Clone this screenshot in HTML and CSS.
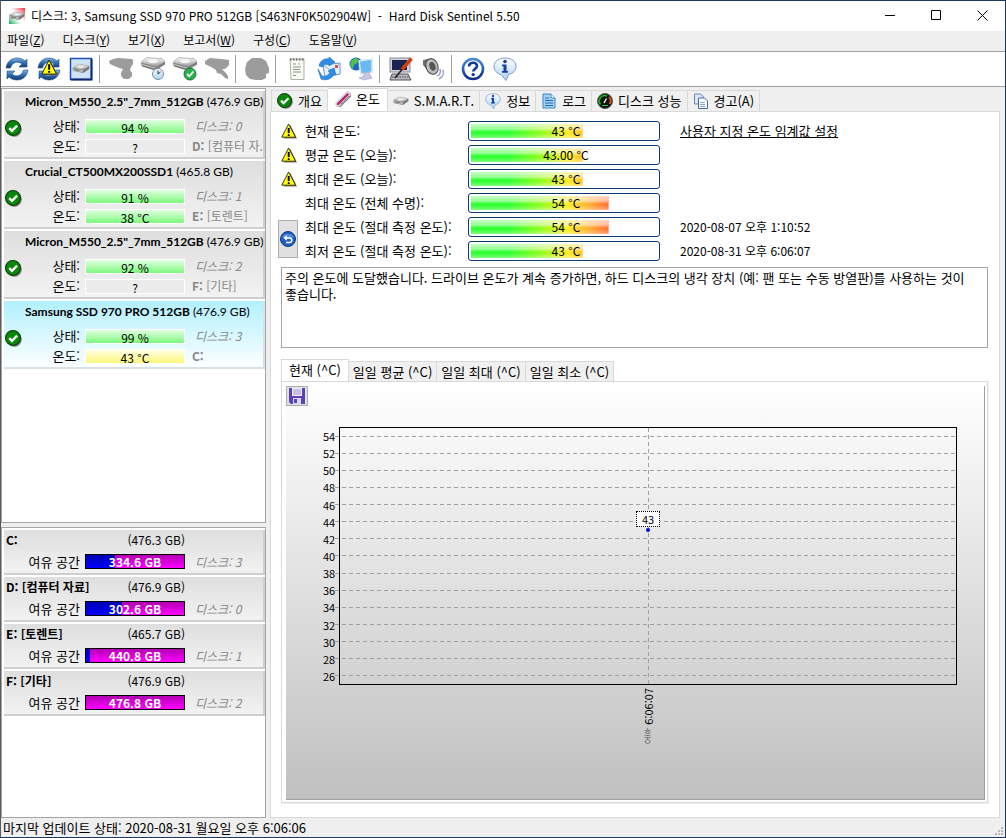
FILE: index.html
```html
<!DOCTYPE html>
<html lang="ko">
  <head>
    <meta charset="utf-8">
    <title>Hard Disk Sentinel</title>
    <link rel="stylesheet" href="styles.css">
  </head>
  <body>
    <!-- shared icons -->
    <svg class="defs" width="0" height="0">
      <defs>
        <linearGradient id="g-blue" x1="0" y1="0" x2="0" y2="1">
          <stop offset="0" stop-color="#7fb6e4" /><stop offset=".5" stop-color="#2c6cae" /><stop offset="1" stop-color="#12386f" />
        </linearGradient>
        <linearGradient id="g-metal" x1="0" y1="0" x2="0" y2="1">
          <stop offset="0" stop-color="#fafafa" /><stop offset="1" stop-color="#9c9c9c" />
        </linearGradient>
        <linearGradient id="g-pale" x1="0" y1="0" x2="0" y2="1">
          <stop offset="0" stop-color="#ffffff" /><stop offset="1" stop-color="#a9d2f5" />
        </linearGradient>
        <linearGradient id="g-ring" x1="0" y1="0" x2="0" y2="1">
          <stop offset="0" stop-color="#4a8be0" /><stop offset="1" stop-color="#0b2f8a" />
        </linearGradient>
        <linearGradient id="g-app" x1="1" y1="0" x2="0" y2="1">
          <stop offset="0" stop-color="#f22a3a" /><stop offset=".45" stop-color="#ffffff" />
          <stop offset=".6" stop-color="#ffffff" /><stop offset="1" stop-color="#18b050" />
        </linearGradient>
      </defs>
      <symbol id="i-check" viewBox="0 0 16 16">
        <circle cx="8.8" cy="8.8" r="7" fill="#777" />
        <circle cx="7.5" cy="7.5" r="7" fill="#0a860a" stroke="#043c04" />
        <path d="M4 7.6l2.6 2.6 4.8-4.9" fill="none" stroke="#fff" stroke-width="2.2" />
      </symbol>
      <symbol id="i-warn" viewBox="0 0 16 16">
        <path d="M9.4 2L16 15.6H3z" fill="#777" />
        <path d="M7.6 1L14.6 14.2H.8z" fill="#ff0" stroke="#222" stroke-width=".9" />
        <path d="M7.7 5v5M7.7 11.2v1.8" stroke="#000" stroke-width="1.9" />
      </symbol>
      <symbol id="i-sync" viewBox="0 0 24 24">
        <path d="M1 11C2 4 7 1 12 1c3 0 6 1 8 3l2-2v8h-8l3-3c-4-3.5-10-2-11.5 4z" fill="url(#g-blue)" stroke="#1c4a80" stroke-width=".6" />
        <path d="M23 13c-1 7-6 10-11 10-3 0-6-1-8-3l-2 2v-8h8l-3 3c4 3.5 10 2 11.5-4z" fill="url(#g-blue)" stroke="#1c4a80" stroke-width=".6" />
      </symbol>
      <symbol id="i-disk" viewBox="0 0 24 16">
        <path d="M1 7L9 2l14 2.5v4L15 14 1 11z" fill="#777" />
        <path d="M1 7L9 2l14 2.5-8 5z" fill="url(#g-metal)" stroke="#999" stroke-width=".5" />
        <ellipse cx="11.5" cy="5.600" rx="5" ry="2" fill="#eee" stroke="#aaa" stroke-width=".5" />
        <path d="M1 7.5L15 10v3.5L1 11z" fill="#b4b4b4" />
        <path d="M3 9.5l7 1.200" stroke="#555" />
      </symbol>
      <!-- drive with the platter side up, used by the test buttons -->
      <symbol id="i-drive" viewBox="0 0 24 16">
        <path d="M0 7l1-2 4-4 16 1 3 3v3l-8 5-4 .5L1 10z" fill="#7f7f7f" />
        <path d="M0 6l5-5 16 1 3 3-9 5z" fill="url(#g-metal)" stroke="#a5a5a5" stroke-width=".5" />
        <ellipse cx="12" cy="4.5" rx="6" ry="2.500" fill="#f4f4f4" stroke="#bbb" stroke-width=".5" />
        <path d="M1 8l13 3.500" stroke="#c8c8c8" />
      </symbol>
      <symbol id="i-info" viewBox="0 0 24 24">
        <path d="M12 1C5.5 1 1 4.500 1 9.500c0 4 3 7 7 8l5 6 2.500-6c5-1 7.500-4.500 7.500-8C23 4.500 18.500 1 12 1z" fill="url(#g-pale)" stroke="#7d9cc4" />
        <circle cx="12" cy="4.500" r="1.800" fill="#1a3fa0" />
        <path d="M9 7.500h4.500v6.500H15v1.700H9V14h1.500V9.200H9z" fill="#1a3fa0" />
      </symbol>
    </svg>

    <div class="window">
      <header class="titlebar">
        <svg class="app-icon" viewBox="0 0 16 16">
          <rect width="16" height="16" fill="url(#g-app)" />
          <use href="#i-disk" x="0" y="2" width="16" height="12" />
        </svg>
        <h1 class="title">디스크: 3, Samsung SSD 970 PRO 512GB [S463NF0K502904W] &nbsp;- &nbsp;Hard Disk Sentinel 5.50</h1>
        <div class="window-buttons">
          <button aria-label="최소화"><svg viewBox="0 0 11 11"><path d="M0 5.5h10" /></svg></button>
          <button aria-label="최대화"><svg viewBox="0 0 11 11"><path d="M.5.5h9v9h-9z" /></svg></button>
          <button aria-label="닫기"><svg viewBox="0 0 11 11"><path d="M.5.5l10 10M10.5.5l-10 10" /></svg></button>
        </div>
      </header>

      <nav class="menubar">
        <button>파일(<u>Z</u>)</button>
        <button>디스크(<u>Y</u>)</button>
        <button>보기(<u>X</u>)</button>
        <button>보고서(<u>W</u>)</button>
        <button>구성(<u>C</u>)</button>
        <button>도움말(<u>V</u>)</button>
      </nav>

      <div class="toolbar">
        <button aria-label="새로 고침"><svg viewBox="0 0 24 24"><use href="#i-sync" /></svg></button>
        <button aria-label="경고 새로 고침"><svg viewBox="0 0 24 24"><use href="#i-sync" /><use href="#i-warn" x="4" y="2" width="17" height="17" /></svg></button>
        <button aria-label="디스크 보기"><svg viewBox="0 0 24 24">
          <rect x="1.5" y="1.5" width="21" height="21" fill="#cfe4fb" stroke="#1d4fae" stroke-width="1.5" />
          <path d="M22.5 2v20.5H2" fill="none" stroke="#0d2c78" stroke-width="2" />
          <use href="#i-disk" x="3" y="5" width="18" height="13" />
        </svg></button>
        <span class="sep"></span>
        <button aria-label="검사" disabled><svg viewBox="0 0 24 24"><path d="M0 4l4-2 5-1 14 1 1 1v4l-2 3-1 3 2 3v3l-3 3h-5l-3-3v-3l2-4-4-1-9-4z" fill="#9c9c9c" /></svg></button>
        <button aria-label="짧은 검사"><svg viewBox="0 0 24 24">
          <use href="#i-drive" x="0" y="-1" width="24" height="17" />
          <circle cx="17" cy="17" r="5.5" fill="url(#g-pale)" stroke="#7790a8" />
          <path d="M17 13.5V17l2.5-2" fill="none" stroke="#234" />
        </svg></button>
        <button aria-label="확장 검사"><svg viewBox="0 0 24 24">
          <use href="#i-drive" x="0" y="-1" width="24" height="17" />
          <circle cx="17" cy="17" r="6" fill="#26b14c" stroke="#137a30" />
          <path d="M14 17l2.3 2.3 4.2-4.8" fill="none" stroke="#fff" stroke-width="1.8" />
        </svg></button>
        <button aria-label="복구" disabled><svg viewBox="0 0 24 24"><path d="M0 4l5-3 12 1 7 1v5l-4 4h-3l3 3 3 4v3l-3-1-4-4-4-1-1-3-3-2-8-4z" fill="#9c9c9c" /></svg></button>
        <span class="sep"></span>
        <button aria-label="표면 검사" disabled><svg viewBox="0 0 24 24"><path d="M7 1h9l5 3 3 7v5l-3 1v4l-4 2h-6l-6-1-4-4-1-6 2-7z" fill="#9c9c9c" /></svg></button>
        <span class="sep"></span>
        <button aria-label="보고서"><svg viewBox="0 0 24 24">
          <path d="M5 2h14v20.5H6z" fill="#f6f8f2" stroke="#aab2a4" />
          <path d="M5 2.5h14" stroke="#666" stroke-width="2" stroke-dasharray="1.5 1.5" />
          <path d="M8 7h3M8 10h8M8 12.5h7M8 15h8M8 18.5h3" stroke="#8a948a" />
          <path d="M13 7h2" stroke="#c7a33a" />
        </svg></button>
        <button aria-label="메일 보내기"><svg viewBox="0 0 24 24">
          <path d="M6 8l17-2v11L8 20z" fill="#e8f2fd" stroke="#5b92cf" />
          <path d="M6 8l9 6 8-8" fill="none" stroke="#8ab3e0" />
          <rect x="18" y="8" width="3" height="3" fill="#e04848" />
          <path d="M2 9c1-5 5-8 10-7V0l6 5-6 4V7C8 6 6 7 6 10z" fill="#2f8fe8" stroke="#1768b8" stroke-width=".6" />
          <path d="M1 12l4 7c3 1 6 0 8-4l-2-1 6-3 2 7-2-1c-2 5-8 7-13 5z" fill="#2f8fe8" stroke="#1768b8" stroke-width=".6" />
        </svg></button>
        <button aria-label="네트워크"><svg viewBox="0 0 24 24">
          <circle cx="7" cy="7" r="6.5" fill="#1e62c8" />
          <path d="M2 4l4-3 4 1-2 4-3 2-1 4-3-3zM9 8l3-1 1 3-3 3z" fill="#4fc04a" />
          <path d="M10 4l13-2v13l-11 2z" fill="#69baf3" stroke="#d6e6f4" stroke-width="1.5" />
          <path d="M15 16l5-1 1 3 2 3-8 2-5-2 5-2z" fill="#c9c9e2" stroke="#9c9cc4" stroke-width=".6" />
        </svg></button>
        <span class="sep"></span>
        <button aria-label="구성"><svg viewBox="0 0 24 24">
          <rect x="1" y="1" width="20" height="14" fill="#d3d3dc" stroke="#888896" />
          <rect x="3" y="3" width="15" height="10" fill="#1b2350" />
          <path d="M3 17h16l3 6H1z" fill="#b8b8c2" stroke="#555" />
          <path d="M3 20h17" stroke="#444" stroke-dasharray="1.5 1" />
          <path d="M22.5 1.5l-9.500 11" stroke="#d0400e" stroke-width="3.5" />
          <path d="M13 12.5L6 21" stroke="#222" stroke-width="1.6" />
        </svg></button>
        <button aria-label="소리"><svg viewBox="0 0 24 24">
          <path d="M2 3l9-2 5 7-1 9-6-1-7-8z" fill="#6f6f6f" />
          <ellipse cx="11" cy="9.5" rx="6" ry="8" transform="rotate(-20 11 9.5)" fill="#bdbdbd" stroke="#4a4a4a" />
          <ellipse cx="11.5" cy="9.5" rx="3" ry="4.5" transform="rotate(-20 11 9.5)" fill="#555" />
          <path d="M16 19c3-1 4-4 3-7M18 22c4-2 5-6 4-9" fill="none" stroke="#9aa0c8" stroke-width="1.5" />
        </svg></button>
        <span class="sep"></span>
        <button aria-label="도움말"><svg viewBox="0 0 24 24">
          <circle cx="12" cy="12" r="10" fill="#fff" stroke="url(#g-ring)" stroke-width="2.6" />
          <path d="M8 9.5c0-5 8-5 8-.5 0 3-3.7 2.700-3.7 5.5" fill="none" stroke="#0d3a94" stroke-width="2.6" />
          <circle cx="12.2" cy="17.6" r="1.7" fill="#0d3a94" />
        </svg></button>
        <button aria-label="정보"><svg viewBox="0 0 24 24"><use href="#i-info" /></svg></button>
      </div>

      <div class="content">
        <aside class="sidebar">
          <section class="pane disks">
            <article class="disk">
              <h2><b>Micron_M550_2.5"_7mm_512GB</b> (476.9 GB)</h2>
              <svg class="state"><use href="#i-check" /></svg>
              <span class="label">상태:</span><span class="bar good">94 %</span><i class="number">디스크: 0</i>
              <span class="label">온도:</span><span class="bar">?</span><span class="drive"><b>D:</b> [컴퓨터 자.</span>
            </article>
            <article class="disk">
              <h2><b>Crucial_CT500MX200SSD1</b> (465.8 GB)</h2>
              <svg class="state"><use href="#i-check" /></svg>
              <span class="label">상태:</span><span class="bar good">91 %</span><i class="number">디스크: 1</i>
              <span class="label">온도:</span><span class="bar good">38 °C</span><span class="drive"><b>E:</b> [토렌트]</span>
            </article>
            <article class="disk">
              <h2><b>Micron_M550_2.5"_7mm_512GB</b> (476.9 GB)</h2>
              <svg class="state"><use href="#i-check" /></svg>
              <span class="label">상태:</span><span class="bar good">92 %</span><i class="number">디스크: 2</i>
              <span class="label">온도:</span><span class="bar">?</span><span class="drive"><b>F:</b> [기타]</span>
            </article>
            <article class="disk selected">
              <h2><b>Samsung SSD 970 PRO 512GB</b> (476.9 GB)</h2>
              <svg class="state"><use href="#i-check" /></svg>
              <span class="label">상태:</span><span class="bar good">99 %</span><i class="number">디스크: 3</i>
              <span class="label">온도:</span><span class="bar warm">43 °C</span><span class="drive"><b>C:</b></span>
            </article>
          </section>

          <section class="pane volumes">
            <article class="volume">
              <h2>C:</h2><span class="size">(476.3 GB)</span>
              <span class="label">여유 공간</span><span class="space" style="--used: 30%">334.6 GB</span><i class="number">디스크: 3</i>
            </article>
            <article class="volume">
              <h2>D: [컴퓨터 자료]</h2><span class="size">(476.9 GB)</span>
              <span class="label">여유 공간</span><span class="space" style="--used: 37%">302.6 GB</span><i class="number">디스크: 0</i>
            </article>
            <article class="volume">
              <h2>E: [토렌트]</h2><span class="size">(465.7 GB)</span>
              <span class="label">여유 공간</span><span class="space" style="--used: 4%">440.8 GB</span><i class="number">디스크: 1</i>
            </article>
            <article class="volume">
              <h2>F: [기타]</h2><span class="size">(476.9 GB)</span>
              <span class="label">여유 공간</span><span class="space" style="--used: 0%">476.8 GB</span><i class="number">디스크: 2</i>
            </article>
          </section>
        </aside>

        <main class="main">
          <div class="tabs" role="tablist">
            <button role="tab"><svg><use href="#i-check" /></svg>개요</button>
            <button role="tab" class="active" aria-selected="true"><svg viewBox="0 0 16 16">
              <path d="M4 14L14 4" stroke="#777" stroke-width="5" stroke-linecap="round" />
              <path d="M3 13L13 3" stroke="#d8d0d8" stroke-width="5.5" stroke-linecap="round" />
              <path d="M3 13l9.500-9.500" stroke="#b8206a" stroke-width="2.4" stroke-linecap="round" />
              <path d="M6 13l8-8" stroke="#555" stroke-dasharray="1 1" />
            </svg>온도</button>
            <button role="tab"><svg viewBox="0 0 16 16"><use href="#i-disk" x="0" y="2" width="16" height="12" /></svg>S.M.A.R.T.</button>
            <button role="tab"><svg><use href="#i-info" /></svg>정보</button>
            <button role="tab"><svg viewBox="0 0 16 16">
              <path d="M2 1h8l4 4v10H2z" fill="#a5d3f8" stroke="#3b82c4" />
              <path d="M10 1v4h4" fill="#fff" stroke="#3b82c4" />
              <path d="M4 5h4M4 7.5h8M4 10h8M4 12.5h8" stroke="#2a62a8" />
            </svg>로그</button>
            <button role="tab"><svg viewBox="0 0 16 16">
              <circle cx="8" cy="8" r="7.5" fill="#111" stroke="#555" />
              <path d="M3.5 11.5A5.500 5.500 0 0 1 10 3" fill="none" stroke="#1fae1f" stroke-width="1.8" />
              <path d="M12 4a5.500 5.500 0 0 1 .5 7" fill="none" stroke="#e05a18" stroke-width="1.8" />
              <path d="M7 10l2.500-4.500" stroke="#eee" stroke-width="1.5" />
              <path d="M5 12.500h6" stroke="#3c3" />
            </svg>디스크 성능</button>
            <button role="tab"><svg viewBox="0 0 16 16">
              <path d="M1.5 1h6l3 3v7h-9z" fill="#dbe6f7" stroke="#6a86b8" />
              <path d="M5.5 5h6l3 3v7.500h-9z" fill="#fff" stroke="#4468a8" />
              <path d="M7 9.500h5M7 11.500h5M7 13.500h5" stroke="#8aa5d0" />
            </svg>경고(A)</button>
          </div>

          <div class="page">
            <div class="temps">
              <svg class="warn"><use href="#i-warn" /></svg>
              <span class="name">현재 온도:</span>
              <span class="meter" style="--value: 60%">43 °C</span>
              <a class="note link" href="#">사용자 지정 온도 임계값 설정</a>

              <svg class="warn"><use href="#i-warn" /></svg>
              <span class="name">평균 온도 (오늘):</span>
              <span class="meter" style="--value: 60%">43.00 °C</span>

              <svg class="warn"><use href="#i-warn" /></svg>
              <span class="name">최대 온도 (오늘):</span>
              <span class="meter" style="--value: 60%">43 °C</span>

              <span class="name">최대 온도 (전체 수명):</span>
              <span class="meter" style="--value: 74%">54 °C</span>

              <button class="reset" aria-label="초기화"><svg viewBox="0 0 16 16">
                <circle cx="8" cy="8" r="7.5" fill="#1f5fc0" stroke="#0e3a86" />
                <path d="M2 6a6.500 5 0 0 1 12 0c-3 2-9 2-12 0z" fill="#76a9ea" opacity=".6" />
                <path d="M6 11.500h3.500a2.300 2.300 0 0 0 0-4.600H5" fill="none" stroke="#fff" stroke-width="1.5" />
                <path d="M6.800 4L3.500 6.900l3.300 2.900z" fill="#fff" />
              </svg></button>
              <span class="name">최대 온도 (절대 측정 온도):</span>
              <span class="meter" style="--value: 74%">54 °C</span>
              <span class="note">2020-08-07 오후 1:10:52</span>

              <span class="name">최저 온도 (절대 측정 온도):</span>
              <span class="meter" style="--value: 60%">43 °C</span>
              <span class="note">2020-08-31 오후 6:06:07</span>
            </div>

            <textarea class="message" readonly aria-label="온도 설명">주의 온도에 도달했습니다. 드라이브 온도가 계속 증가하면, 하드 디스크의 냉각 장치 (예: 팬 또는 수동 방열판)를 사용하는 것이 좋습니다.</textarea>

            <div class="subtabs" role="tablist">
              <button role="tab" class="active" aria-selected="true">현재 (^C)</button>
              <button role="tab">일일 평균 (^C)</button>
              <button role="tab">일일 최대 (^C)</button>
              <button role="tab">일일 최소 (^C)</button>
            </div>

            <div class="subpage">
              <div class="chart">
                <button class="save" aria-label="저장"><svg viewBox="0 0 16 16">
                  <path d="M0 0h16v16H2l-2-2z" fill="#5a43b8" />
                  <path d="M3 0h10v8H3z" fill="#f0eefa" />
                  <path d="M4 2h8M4 4h8M4 6h8" stroke="#9a8fd0" />
                  <path d="M4 10h8v6H4z" fill="#dcd8f0" />
                  <path d="M5 11h3v4H5z" fill="#5a43b8" />
                </svg></button>
                <div class="plot">
                  <div class="rows">
                    <div>54</div><div>52</div><div>50</div><div>48</div><div>46</div>
                    <div>44</div><div>42</div><div>40</div><div>38</div><div>36</div>
                    <div>34</div><div>32</div><div>30</div><div>28</div><div>26</div>
                  </div>
                  <div class="frame">
                    <div class="point" style="top: 40%"><span>43</span></div>
                  </div>
                  <div class="time"><small>오후</small> 6:06:07</div>
                </div>
              </div>
            </div>
          </div>
        </main>
      </div>

      <footer class="statusbar">
        <span>마지막 업데이트 상태: 2020-08-31 월요일 오후 6:06:06</span>
        <svg class="grip" viewBox="0 0 8 8"><path d="M6 0h2v2H6zM3 3h2v2H3zM6 3h2v2H6zM0 6h2v2H0zM3 6h2v2H3zM6 6h2v2H6z" fill="#b8b8b8" /></svg>
      </footer>
    </div>
  </body>
</html>
```
FILE: styles.css
```css
* {
  box-sizing: border-box;
}

body {
  margin: 0;
  font-family: "Noto Sans CJK KR", "Noto Sans", sans-serif;
  font-size: 13px;
  line-height: 16px;
  color: #000;
}

button {
  font: inherit;
  color: inherit;
  background: none;
  border: none;
  padding: 0;
  margin: 0;
  white-space: nowrap;
}

h1,
h2 {
  margin: 0;
  font-size: 12px;
  font-weight: normal;
}

.defs {
  position: absolute;
}

.window {
  display: flex;
  flex-direction: column;
  min-height: 100vh;
  background: #efefef;
  border: 1px solid #1c3a60;
  border-left-color: #5a5a60;
}

/* title bar */
.titlebar {
  display: flex;
  align-items: center;
  height: 30px;
  padding-left: 8px;
  background: #fff;
}

.app-icon {
  width: 16px;
  height: 16px;
  margin-right: 6px;
}

.title {
  flex: 1;
  white-space: nowrap;
}

.window-buttons {
  display: flex;
}

.window-buttons button {
  width: 46px;
  height: 30px;
}

.window-buttons svg {
  width: 11px;
  height: 11px;
  fill: none;
  stroke: #000;
}

/* menu */
.menubar {
  display: flex;
  gap: 18px;
  height: 21px;
  padding: 0 0 2px 6px;
  font-size: 12px;
  border-bottom: 1px solid #a0a0a0;
}

/* toolbar */
.toolbar {
  display: flex;
  align-items: center;
  height: 35px;
  background: #fff;
  border-bottom: 1px solid #a0a0a0;
}

.toolbar button {
  width: 32px;
  height: 32px;
}

.toolbar svg {
  display: block;
  width: 24px;
  height: 24px;
  margin: 0 auto;
}

.sep {
  width: 8px;
  height: 28px;
  background: linear-gradient(#a0a0a0, #a0a0a0) 2px 0 / 1px 100% no-repeat;
}

/* left side */
.content {
  flex: 1;
  display: flex;
}

.sidebar {
  display: flex;
  flex-direction: column;
  gap: 4px;
  width: 265px;
  padding-top: 1px;
}

.pane {
  padding: 2px 0 0 2px;
  background: #fff;
  border: 1px solid #a5a5a5;
}

.disks {
  flex: 3;
}

.volumes {
  flex: 2;
}

.disk,
.volume {
  display: grid;
  align-items: center;
  background: linear-gradient(#dedede, #f2f2f2);
  border-right: 2px solid #cfcfcf;
  border-bottom: 2px solid #cfcfcf;
  margin-bottom: 2px;
  white-space: nowrap;
}

.disk {
  grid-template-columns: 21px 60px 100px 1fr;
  grid-template-rows: 25px 20px 20px;
  height: 68px;
}

.disk.selected {
  background: linear-gradient(#b2f0ff, #fcffff);
  border-color: #d8e2e4;
}

.disk h2 {
  grid-column: 2 / 5;
  align-self: start;
  font-family: Lato, "Noto Sans CJK KR", sans-serif;
  line-height: 22px;
}

.state {
  grid-column: 1;
  grid-row: 2 / 4;
  align-self: start;
  width: 17px;
  height: 17px;
  margin: 4px 0 0 1px;
}

.label {
  grid-column-start: 2;
  text-align: right;
  padding-right: 5px;
}

.bar {
  height: 15px;
  line-height: 15px;
  font-size: 12px;
  text-align: center;
  border: 1px solid #fff;
  background: #ececec;
}

.bar.good {
  background: linear-gradient(#e2ffe2, #7dfa7d);
}

.bar.warm {
  background: linear-gradient(#ffffe2, #fcf67a);
}

.number {
  padding-left: 10px;
  font-size: 12px;
  color: #888;
}

.drive {
  padding-left: 7px;
  font-size: 12px;
  color: #888;
}

.volume {
  grid-template-columns: 81px 100px 1fr;
  grid-template-rows: 21px 22px;
  height: 45px;
}

.volume h2 {
  grid-column: 1;
  grid-row: 1;
  padding-left: 2px;
  font-weight: bold;
}

.volume .size {
  grid-column: 2;
  font-size: 12px;
  text-align: right;
}

.volume .label {
  grid-column-start: 1;
}

.space {
  height: 15px;
  line-height: 14px;
  font-size: 12px;
  text-align: center;
  font-weight: bold;
  color: #fff;
  border: 1px solid #000;
  background: linear-gradient(rgba(0, 0, 0, 0.3), transparent),
    linear-gradient(90deg, #0000ff var(--used), #ff00ff var(--used));
}

/* right side */
.main {
  flex: 1;
  display: flex;
  flex-direction: column;
  min-width: 0;
  padding: 0 5px 0 4px;
}

.tabs,
.subtabs {
  display: flex;
  align-items: flex-end;
}

.tabs {
  height: 24px;
  padding-left: 1px;
}

.tabs button,
.subtabs button {
  height: 21px;
  border: 1px solid #d9d9d9;
  border-left: none;
  border-bottom: none;
  background: #f0f0f0;
}

.tabs button {
  display: flex;
  align-items: center;
  gap: 5px;
  padding: 0 5px;
}

.tabs button:first-child {
  border-left: 1px solid #d9d9d9;
}

.tabs .active {
  height: 24px;
  padding: 0 7px 3px;
  margin-bottom: -1px;
  background: #fff;
}

.tabs svg {
  width: 16px;
  height: 16px;
}

.page {
  flex: 1;
  display: flex;
  flex-direction: column;
  padding: 7px 11px 14px 10px;
  background: #fff;
  border: 1px solid #d9d9d9;
}

.temps {
  display: grid;
  grid-template-columns: 24px 163px minmax(100px, 192px) 1fr;
  grid-auto-rows: 24px;
  align-items: center;
  white-space: nowrap;
}

.warn {
  grid-column: 1;
  width: 16px;
  height: 16px;
}

.name {
  grid-column: 2;
}

.meter {
  position: relative;
  z-index: 0;
  height: 20px;
  padding-left: 4px;
  line-height: 18px;
  font-size: 12px;
  text-align: center;
  border: 1px solid #0c3c74;
  border-radius: 3px;
}

/* filled part of the scale, cut at the current value */
.meter::before {
  content: "";
  position: absolute;
  inset: 2px;
  z-index: -1;
  background: linear-gradient(rgba(255, 255, 255, 0.7), rgba(255, 255, 255, 0.5) 35%, rgba(255, 255, 255, 0) 55%, rgba(255, 255, 255, 0) 70%, rgba(255, 255, 255, 0.4)),
    linear-gradient(90deg, #33ff33 20%, #80ff20 35%, #ffee20 52%, #ffb838 62%, #ff7038 74%, #ff2020);
  clip-path: inset(0 calc(100% - var(--value)) 0 0);
}

.note {
  grid-column: 4;
  padding-left: 20px;
  font-size: 12px;
  color: #000;
}

.link {
  font-size: 13px;
}

.reset {
  grid-column: 1;
  grid-row: 5 / 7;
  width: 20px;
  height: 38px;
  margin-left: -3px;
  border: 1px solid #adadad;
  background: #e1e1e1;
}

.reset svg {
  display: block;
  width: 16px;
  height: 16px;
  margin: 0 auto;
}

.message {
  height: 81px;
  margin-top: 4px;
  padding: 2px 3px;
  font: inherit;
  color: #000;
  word-break: keep-all;
  border: 1px solid #a5a5a5;
  resize: none;
  outline: none;
}

.subtabs {
  height: 22px;
  margin-top: 11px;
}

.subtabs button {
  height: 20px;
  padding: 0 4px;
}

.subtabs .active {
  height: 23px;
  padding: 0 7px 3px;
  margin-bottom: -1px;
  border-left: 1px solid #d9d9d9;
  background: #fff;
}

.subpage {
  flex: 1;
  display: flex;
  padding: 4px 2px 2px 4px;
  border: 1px solid #d9d9d9;
  box-shadow: 1px 1px #efefef;
}

.chart {
  flex: 1;
  display: flex;
  flex-direction: column;
  border-right: 1px solid #a0a0a0;
  border-bottom: 1px solid #a0a0a0;
  background: linear-gradient(#fff, #c0c0c0);
}

.save {
  width: 22px;
  height: 20px;
  border: 1px solid #adadad;
  background: #e1e1e1;
}

.save svg {
  display: block;
  width: 16px;
  height: 16px;
  margin: 0 auto;
}

.plot {
  flex: 1;
  display: grid;
  grid-template-columns: 53px 1fr;
  grid-template-rows: minmax(240px, 1fr) 114px;
  padding: 21px 27px 0 0;
}

.frame {
  grid-column: 2;
  grid-row: 1;
  position: relative;
  border: 1px solid #000;
  background: repeating-linear-gradient(#a0a0a0 0 4px, transparent 4px 7px) 50% 0 / 1px 100% no-repeat;
}

.rows {
  grid-column: 1 / 3;
  grid-row: 1;
  display: flex;
  flex-direction: column;
  justify-content: space-between;
  padding: 2px 0;
}

.rows div {
  display: flex;
  align-items: center;
  height: 14px;
  padding-left: 37px;
  font-size: 11px;
}

.rows div::after {
  content: "";
  flex: 1;
  height: 1px;
  background: repeating-linear-gradient(90deg, #a0a0a0 0 4px, transparent 4px 7px);
}

.point {
  position: absolute;
  left: 50%;
  width: 4px;
  height: 4px;
  margin: -2px;
  border-radius: 2px;
  background: #0000c0;
}

.point span {
  position: absolute;
  bottom: 5px;
  left: -10px;
  width: 24px;
  height: 16px;
  line-height: 14px;
  font-size: 11px;
  text-align: center;
  border: 1px dotted #000;
  background: #fff;
}

.time {
  grid-column: 2;
  writing-mode: vertical-rl;
  transform: rotate(180deg);
  justify-self: center;
  align-self: start;
  padding-bottom: 3px;
  font-size: 11px;
}

.time small {
  font-size: 8px;
  color: #555;
}

/* status bar */
.statusbar {
  display: flex;
  justify-content: space-between;
  align-items: center;
  height: 19px;
  padding: 0 2px;
}

.grip {
  width: 8px;
  height: 8px;
  align-self: flex-end;
  margin-bottom: 2px;
}
```
